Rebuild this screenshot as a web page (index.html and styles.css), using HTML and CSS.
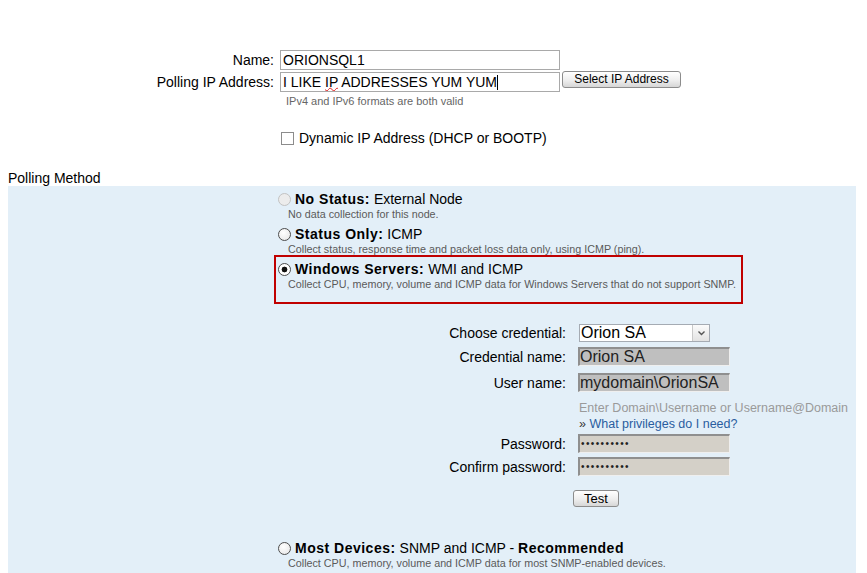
FILE: index.html
```html
<!DOCTYPE html>
<html>
<head>
<title>Add Node</title>
<link rel="stylesheet" href="styles.css">
</head>
<body>
<div class="page">
  <div class="frow">
    <label class="flabel">Name:</label>
    <div class="field">ORIONSQL1</div>
  </div>
  <div class="frow">
    <label class="flabel">Polling IP Address:</label>
    <div class="field">I LIKE <span class="typo">IP</span> ADDRESSES YUM YUM<span class="caret"></span></div>
    <button type="button" class="btn btn-ip">Select IP Address</button>
  </div>
  <div class="fhint">IPv4 and IPv6 formats are both valid</div>
  <div class="dyn"><input type="checkbox" id="dyn" class="chk"><label for="dyn">Dynamic IP Address (DHCP or BOOTP)</label></div>

  <div class="section-title">Polling Method</div>
  <div class="panel">
    <div class="methods">
      <div class="opt">
        <div class="opt-head"><input type="radio" name="method" class="rad" disabled><b>No Status:</b> External Node</div>
        <div class="opt-desc">No data collection for this node.</div>
      </div>
      <div class="opt">
        <div class="opt-head"><input type="radio" name="method" class="rad"><b>Status Only:</b> ICMP</div>
        <div class="opt-desc">Collect status, response time and packet loss data only, using ICMP (ping).</div>
      </div>
      <div class="opt selected">
        <div class="opt-head"><input type="radio" name="method" class="rad" checked><b>Windows Servers:</b> WMI and ICMP</div>
        <div class="opt-desc">Collect CPU, memory, volume and ICMP data for Windows Servers that do not support SNMP.</div>
      </div>
    </div>

    <div class="cred">
      <div class="cred-row r1">
        <label class="cred-label">Choose credential:</label>
        <div class="select"><span>Orion SA</span><i class="arrow"><svg width="7" height="5" viewBox="0 0 7 5"><path d="M0.5 0.5 L3.5 3.5 L6.5 0.5" fill="none" stroke="#555" stroke-width="1.4"/></svg></i></div>
      </div>
      <div class="cred-row r2">
        <label class="cred-label">Credential name:</label>
        <div class="tbox">Orion SA</div>
      </div>
      <div class="cred-row r3">
        <label class="cred-label">User name:</label>
        <div class="tbox">mydomain\OrionSA</div>
      </div>
      <div class="cred-hint">Enter Domain\Username or Username@Domain</div>
      <div class="cred-link">&raquo; <a href="#">What privileges do I need?</a></div>
      <div class="cred-row r4">
        <label class="cred-label">Password:</label>
        <div class="tbox pw">&bull;&bull;&bull;&bull;&bull;&bull;&bull;&bull;&bull;&bull;</div>
      </div>
      <div class="cred-row r5">
        <label class="cred-label">Confirm password:</label>
        <div class="tbox pw">&bull;&bull;&bull;&bull;&bull;&bull;&bull;&bull;&bull;&bull;</div>
      </div>
      <div class="test-row"><button type="button" class="btn btn-test">Test</button></div>
    </div>

    <div class="methods last">
      <div class="opt">
        <div class="opt-head"><input type="radio" name="method" class="rad"><b>Most Devices:</b> SNMP and ICMP - <b>Recommended</b></div>
        <div class="opt-desc">Collect CPU, memory, volume and ICMP data for most SNMP-enabled devices.</div>
      </div>
    </div>
  </div>
</div>
</body>
</html>
```

FILE: styles.css
```css
body {
    margin: 0;
    font-family: "Liberation Sans", Arial, sans-serif;
    font-size: 14px;
    color: #000;
    background: #fff;
}
.page {
    padding-top: 50px;
}

/* node name / ip */
.frow {
    display: flex;
    align-items: flex-start;
    margin-bottom: 2px;
}
.flabel {
    width: 274px;
    margin-right: 6px;
    text-align: right;
    line-height: 20px;
}
.field {
    width: 280px;
    height: 20px;
    box-sizing: border-box;
    border: 1px solid #a9a9a9;
    padding: 0 2px;
    line-height: 18px;
    white-space: nowrap;
    overflow: hidden;
}
.typo {
    text-decoration: underline wavy #e02020;
    text-decoration-thickness: 1px;
    text-underline-offset: 0;
}
.caret {
    display: inline-block;
    width: 1px;
    height: 15px;
    background: #000;
    vertical-align: -3px;
}
.btn {
    font-family: "Liberation Sans", Arial, sans-serif;
    font-size: 12px;
    line-height: 15px;
    padding: 0;
    color: #000;
    border: 1px solid #8c8c8c;
    border-radius: 3px;
    background: linear-gradient(#ffffff, #eeeeee 55%, #d6d6d6);
}
.btn-ip {
    width: 119px;
    height: 17px;
    margin: -1px 0 0 2px;
}
.fhint {
    margin: 3px 0 0 286px;
    font-size: 11px;
    line-height: 13px;
    color: #666;
}
.dyn {
    margin: 22px 0 0 281px;
    display: flex;
    align-items: center;
    line-height: 16px;
}
.chk {
    appearance: none;
    width: 13px;
    height: 13px;
    margin: 0 5px 0 0;
    border: 1px solid #8c8c8c;
    background: #fff;
}
.section-title {
    margin: 24px 0 0 8px;
    line-height: 16px;
}

/* polling method panel */
.panel {
    margin: 0 11px 0 8px;
    padding: 5px 0 3px;
    background: #e3eff8;
}
.methods {
    margin-left: 270px;
}
.methods.last {
    margin-top: 33px;
}
.opt {
    margin-bottom: 5px;
}
.methods.last .opt {
    margin-bottom: 0;
}
.opt-head {
    line-height: 16px;
    white-space: nowrap;
}
.opt-head b {
    letter-spacing: 0.5px;
}
.rad {
    appearance: none;
    width: 13px;
    height: 13px;
    box-sizing: border-box;
    margin: 0 4px 0 0;
    vertical-align: -2px;
    border: 1px solid #4d4d4d;
    border-radius: 50%;
    background: radial-gradient(circle at 40% 35%, #ffffff, #e4e4e4);
}
.rad:checked {
    background: radial-gradient(circle, #111 0 2.6px, #fff 3.2px);
}
.rad:disabled {
    border-color: #c2c2c2;
    background: #ececec;
}
.opt-desc {
    padding-left: 10px;
    font-size: 10.75px;
    line-height: 14px;
    color: #5a5a5a;
    white-space: nowrap;
}
.opt.selected {
    width: 469px;
    box-sizing: border-box;
    margin: -6px 0 0 -4px;
    padding: 4px 0 11px 2px;
    border: 2px solid #c00000;
}

/* credentials */
.cred {
    margin-top: 20px;
}
.cred-row {
    display: flex;
    align-items: center;
}
.cred-label {
    width: 558px;
    margin-right: 12px;
    text-align: right;
    line-height: 16px;
}
.r2 { margin-top: 5px; }
.r3 { margin-top: 7px; }
.r4 { margin-top: 3px; }
.r5 { margin-top: 4px; }
.select {
    display: flex;
    width: 131px;
    height: 18px;
    box-sizing: border-box;
    margin-left: 1px;
    border: 1px solid #a5abb3;
    background: #fff;
}
.select span {
    flex: 1;
    font-size: 16px;
    line-height: 16px;
    padding-left: 1px;
}
.select .arrow {
    display: flex;
    align-items: center;
    justify-content: center;
    width: 16px;
    border-left: 1px solid #c9c9c9;
    background: linear-gradient(#fbfbfb, #e3e3e3);
}
.tbox {
    width: 152px;
    height: 19px;
    box-sizing: border-box;
    border-top: 2px solid #8f8f8f;
    border-left: 2px solid #8f8f8f;
    border-right: 1px solid #efefef;
    border-bottom: 1px solid #efefef;
    background: #bfbfbf;
    font-size: 16px;
    line-height: 16px;
    color: #222;
    white-space: nowrap;
    overflow: hidden;
}
.tbox.pw {
    background: #d4d0c8;
    font-size: 10px;
    letter-spacing: 1.4px;
    padding-left: 1px;
}
.cred-hint {
    margin: 9px 0 0 571px;
    font-size: 12.5px;
    line-height: 14px;
    color: #9a9a9a;
    white-space: nowrap;
}
.cred-link {
    margin: 2px 0 0 571px;
    font-size: 12.5px;
    line-height: 14px;
    color: #333;
}
.cred-link a {
    color: #2a5d9f;
    text-decoration: none;
}
.test-row {
    margin: 14px 0 0 565px;
}
.btn-test {
    width: 46px;
    height: 17px;
    font-size: 13px;
}
```
